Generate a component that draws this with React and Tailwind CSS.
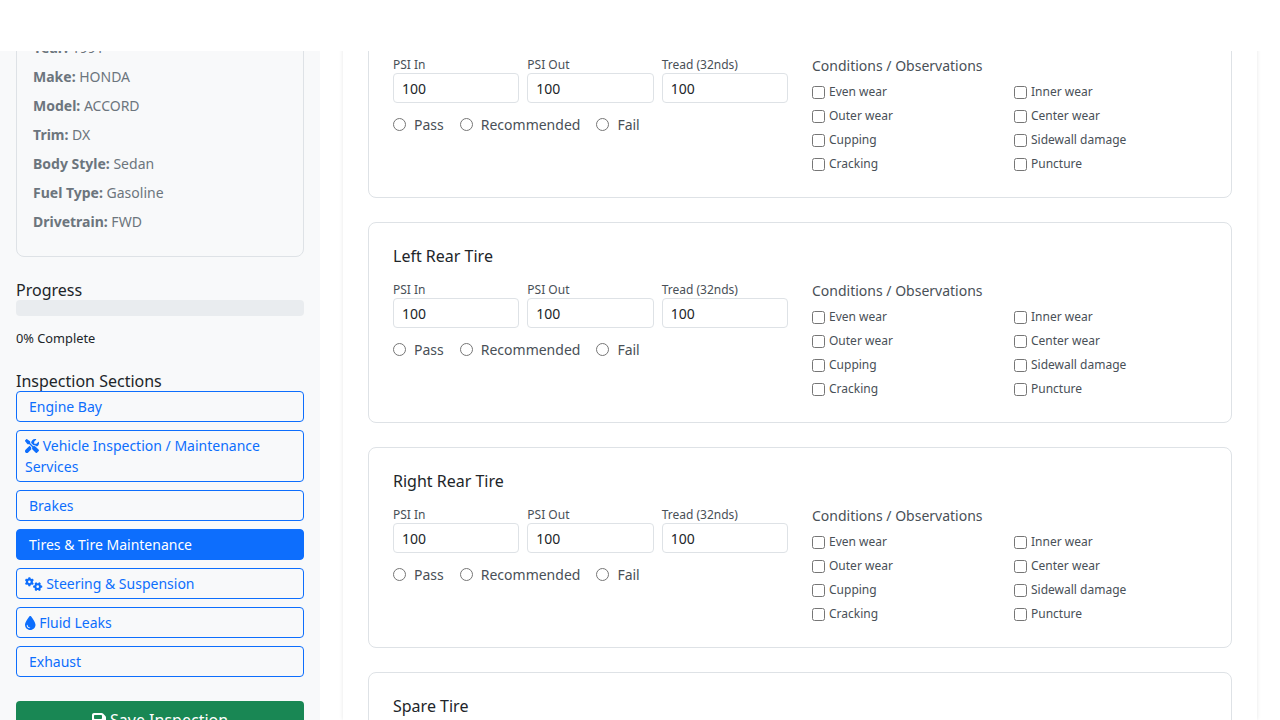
import React from "react";

const NOTO = '"Noto Sans", sans-serif';

function Wrench() {
  return (
    <svg viewBox="0 0 512 512" className="inline-block h-[14px] w-[14px] align-[-2px]" fill="currentColor">
      <path d="M78.6 5C69.1-2.4 55.6-1.5 47 7L7 47c-8.5 8.5-9.4 22-2.1 31.6l80 104c4.5 5.900 11.600 9.400 19 9.400h54.100l109 109c-14.700 29-10 65.400 14.300 89.600l112 112c12.500 12.500 32.800 12.500 45.300 0l64-64c12.500-12.500 12.500-32.800 0-45.300l-112-112c-24.200-24.200-60.600-29-89.600-14.300l-109-109V104c0-7.500-3.500-14.500-9.400-19L78.600 5zM19.900 396.100C7.200 408.800 0 426.100 0 444.100C0 481.600 30.400 512 67.900 512c18 0 35.300-7.200 48-19.900L233.700 374.300c-7.800-20.900-9-43.600-3.600-65.100l-61.700-61.700L19.900 396.100zM512 144c0-10.500-1.100-20.700-3.200-30.500c-2.400-11.200-16.100-14.100-24.200-6l-63.900 63.900c-3 3-7.100 4.700-11.300 4.700H352c-8.800 0-16-7.200-16-16V102.600c0-4.200 1.700-8.300 4.700-11.300l63.900-63.900c8.100-8.100 5.200-21.800-6-24.200C388.700 1.100 378.500 0 368 0C288.500 0 224 64.500 224 144l0 .8 85.300 85.300c36-9.100 75.800 .5 104 28.700L429 274.500c49-23 83-72.800 83-130.500z" />
    </svg>
  );
}

function Gears() {
  return (
    <svg viewBox="0 0 640 512" className="inline-block h-[14px] w-[17.500px] align-[-2px]" fill="currentColor">
      <path d="M308.500 135.300c7.100-6.300 9.900-16.200 6.200-25c-2.300-5.300-4.800-10.500-7.600-15.500L304 89.400c-3-5-6.300-9.900-9.800-14.600c-5.700-7.600-15.700-10.100-24.700-7.100l-28.200 9.300c-10.700-8.800-23-16-36.200-20.900L199 27.100c-1.900-9.300-9.100-16.700-18.500-17.800C173.900 8.400 167.200 8 160.400 8h-.7c-6.800 0-13.500 .4-20.100 1.200c-9.400 1.100-16.600 8.600-18.500 17.800L115 56.100c-13.300 5-25.500 12.100-36.200 20.900L50.500 67.800c-9-3-19-.5-24.700 7.100c-3.500 4.700-6.800 9.600-9.900 14.600l-3 5.300c-2.800 5-5.300 10.200-7.600 15.600c-3.700 8.700-.9 18.600 6.200 25l22.200 19.800C32.600 161.900 32 168.900 32 176s.6 14.100 1.700 20.900L11.500 216.700c-7.100 6.300-9.900 16.200-6.200 25c2.300 5.300 4.800 10.500 7.600 15.600l3 5.200c3 5.100 6.300 9.900 9.900 14.600c5.700 7.600 15.700 10.100 24.700 7.100l28.200-9.300c10.700 8.800 23 16 36.200 20.900l6.100 29.100c1.900 9.300 9.100 16.700 18.500 17.800c6.700 .8 13.500 1.200 20.400 1.200s13.700-.4 20.400-1.200c9.400-1.100 16.600-8.600 18.500-17.800l6.100-29.100c13.300-5 25.500-12.100 36.200-20.900l28.200 9.300c9 3 19 .5 24.700-7.100c3.500-4.700 6.800-9.500 9.800-14.600l3.100-5.400c2.800-5 5.300-10.200 7.600-15.500c3.700-8.700 .9-18.600-6.200-25l-22.200-19.800c1.100-6.800 1.700-13.800 1.700-20.900s-.6-14.100-1.700-20.900l22.200-19.800zM112 176a48 48 0 1 1 96 0 48 48 0 1 1 -96 0zM504.700 500.500c6.300 7.100 16.200 9.900 25 6.200c5.300-2.300 10.500-4.800 15.500-7.600l5.400-3.100c5-3 9.900-6.300 14.600-9.800c7.600-5.700 10.100-15.700 7.100-24.700l-9.300-28.200c8.800-10.700 16-23 20.900-36.200l29.100-6.100c9.300-1.900 16.700-9.100 17.800-18.500c.8-6.700 1.200-13.500 1.200-20.400s-.4-13.700-1.200-20.400c-1.100-9.400-8.600-16.600-17.800-18.500L583.900 307c-5-13.300-12.100-25.500-20.900-36.200l9.300-28.200c3-9 .5-19-7.100-24.700c-4.700-3.500-9.600-6.800-14.600-9.900l-5.300-3c-5-2.800-10.200-5.300-15.600-7.600c-8.700-3.700-18.600-.9-25 6.200l-19.800 22.200c-6.800-1.100-13.800-1.700-20.900-1.700s-14.100 .6-20.900 1.700l-19.800-22.200c-6.300-7.100-16.200-9.900-25-6.200c-5.300 2.300-10.500 4.800-15.600 7.600l-5.200 3c-5.100 3-9.900 6.300-14.600 9.900c-7.600 5.700-10.100 15.700-7.100 24.700l9.300 28.200c-8.800 10.700-16 23-20.900 36.200L315.100 313c-9.300 1.900-16.700 9.100-17.800 18.500c-.8 6.700-1.200 13.500-1.200 20.400s.4 13.700 1.200 20.400c1.100 9.400 8.600 16.600 17.800 18.500l29.100 6.100c5 13.300 12.100 25.500 20.900 36.200l-9.300 28.200c-3 9-.5 19 7.100 24.700c4.700 3.500 9.500 6.800 14.600 9.800l5.400 3.100c5 2.800 10.200 5.300 15.500 7.600c8.700 3.700 18.600 .9 25-6.200l19.800-22.200c6.800 1.100 13.800 1.700 20.900 1.700s14.100-.6 20.900-1.700l19.800 22.200zM464 304a48 48 0 1 1 0 96 48 48 0 1 1 0-96z" />
    </svg>
  );
}

function Droplet() {
  return (
    <svg viewBox="0 0 384 512" className="inline-block h-[14px] w-[10.500px] align-[-2px]" fill="currentColor">
      <path d="M192 512C86 512 0 426 0 320C0 228.800 130.200 57.700 166.600 11.700C172.600 4.200 181.500 0 191.100 0h1.800c9.600 0 18.500 4.200 24.500 11.700C253.800 57.700 384 228.800 384 320c0 106-86 192-192 192zM96 336c0-8.800-7.200-16-16-16s-16 7.200-16 16c0 61.900 50.100 112 112 112c8.800 0 16-7.200 16-16s-7.200-16-16-16c-44.200 0-80-35.800-80-80z" />
    </svg>
  );
}

function Save() {
  return (
    <svg viewBox="0 0 448 512" className="inline-block h-[16px] w-[14px] align-[-2px]" fill="currentColor">
      <path d="M64 32C28.700 32 0 60.700 0 96V416c0 35.300 28.700 64 64 64H384c35.300 0 64-28.700 64-64V173.300c0-17-6.700-33.300-18.700-45.300L352 50.700C340 38.700 323.700 32 306.700 32H64zm0 96c0-17.700 14.300-32 32-32H288c17.700 0 32 14.300 32 32v64c0 17.700-14.300 32-32 32H96c-17.700 0-32-14.300-32-32V128zM224 288a64 64 0 1 1 0 128 64 64 0 1 1 0-128z" />
    </svg>
  );
}

const vehicle = [
  ["Year", "1991"],
  ["Make", "HONDA"],
  ["Model", "ACCORD"],
  ["Trim", "DX"],
  ["Body Style", "Sedan"],
  ["Fuel Type", "Gasoline"],
  ["Drivetrain", "FWD"],
];

const left = ["Even wear", "Outer wear", "Cupping", "Cracking"];
const right = ["Inner wear", "Center wear", "Sidewall damage", "Puncture"];

function NavButton({ active, icon, children }) {
  return (
    <button
      className={`block w-full rounded-[4px] border border-[#0d6efd] text-left text-[14px] leading-[21px] ${
        active ? "bg-[#0d6efd] text-white" : "text-[#0d6efd]"
      } ${icon ? "px-2 py-1" : "px-3 py-1"}`}
    >
      {icon}
      {icon ? " " : ""}
      {children}
    </button>
  );
}

function Field({ label }) {
  return (
    <div className="w-[126.330px]">
      <div className="text-[12px] leading-[17px] text-[#495057]">{label}</div>
      <input
        readOnly
        value="100"
        className="block h-[30px] w-full rounded-[4px] border border-[#dee2e6] bg-white px-2 text-[14px] text-[#212529] outline-none"
      />
    </div>
  );
}

function Radio({ label }) {
  return (
    <label className="flex items-center gap-2 text-[14px] leading-[21px] text-[#495057]">
      <span className="h-[13px] w-[13px] rounded-full border border-[#767676] bg-white" />
      <span>{label}</span>
    </label>
  );
}

function Check({ label }) {
  return (
    <label className="flex h-[24px] items-center gap-[4px] text-[12px] text-[#495057]">
      <span className="h-[13px] w-[13px] rounded-[2.500px] border border-[#767676] bg-white" />
      <span>{label}</span>
    </label>
  );
}

function TireCard({ title }) {
  return (
    <section className="h-[201px] rounded-[8px] border border-[#dee2e6] bg-white px-6 pt-6">
      <h3 className="text-[16px] leading-[19px] text-[#212529]">{title}</h3>
      <div className="mt-[15px] flex">
        <div className="w-[419px]">
          <div className="flex gap-2">
            <Field label="PSI In" />
            <Field label="PSI Out" />
            <Field label="Tread (32nds)" />
          </div>
          <div className="mt-[11px] flex gap-4">
            <Radio label="Pass" />
            <Radio label="Recommended" />
            <Radio label="Fail" />
          </div>
        </div>
        <div>
          <div className="-mt-px text-[14px] leading-[21px] text-[#495057]">Conditions / Observations</div>
          <div className="mt-[4px] flex">
            <div className="w-[202px]">
              {left.map((t) => (
                <Check key={t} label={t} />
              ))}
            </div>
            <div>
              {right.map((t) => (
                <Check key={t} label={t} />
              ))}
            </div>
          </div>
        </div>
      </div>
    </section>
  );
}

export default function App() {
  return (
    <div className="relative flex h-[720px] w-[1280px] overflow-hidden bg-white" style={{ fontFamily: NOTO }}>
      <header className="absolute left-0 right-0 top-0 z-10 h-[51px] bg-white" />

      <aside className="w-[320px] shrink-0 bg-[#f8f9fa] px-4">
        <div className="mt-[-20px] h-[277px] rounded-[8px] border border-[#dee2e6] px-4 pt-[56px] text-[14px] leading-[21px] text-[#6c757d]">
          {vehicle.map(([k, v]) => (
            <p key={k} className="mb-2">
              <strong className="font-bold">{k}:</strong> {v}
            </p>
          ))}
        </div>

        <h5 className="mt-[24px] text-[16px] leading-[19px] text-[#212529]">Progress</h5>
        <div className="h-4 rounded-[4px] bg-[#e9ecef]" />
        <div className="mt-[13px] text-[12.800px] leading-[18px] text-[#212529]">0% Complete</div>

        <h5 className="mt-[25px] text-[16px] leading-[19px] text-[#212529]">Inspection Sections</h5>
        <nav className="flex flex-col gap-2">
          <NavButton>Engine Bay</NavButton>
          <NavButton icon={<Wrench />}>Vehicle Inspection / Maintenance Services</NavButton>
          <NavButton>Brakes</NavButton>
          <NavButton active>Tires &amp; Tire Maintenance</NavButton>
          <NavButton icon={<Gears />}>Steering &amp; Suspension</NavButton>
          <NavButton icon={<Droplet />}>Fluid Leaks</NavButton>
          <NavButton>Exhaust</NavButton>
        </nav>

        <button className="mt-6 block h-[38px] w-full rounded-[4px] bg-[#198754] text-center text-[16px] text-white">
          <Save /> Save Inspection
        </button>
      </aside>

      <main className="ml-[23px] w-[914px] shrink-0 px-[25px] shadow-[0_0_4px_rgba(0,0,0,0.1)]">
        <div className="mt-[-3px] flex flex-col gap-6">
          <TireCard title="Right Front Tire" />
          <TireCard title="Left Rear Tire" />
          <TireCard title="Right Rear Tire" />
          <TireCard title="Spare Tire" />
        </div>
      </main>
    </div>
  );
}
